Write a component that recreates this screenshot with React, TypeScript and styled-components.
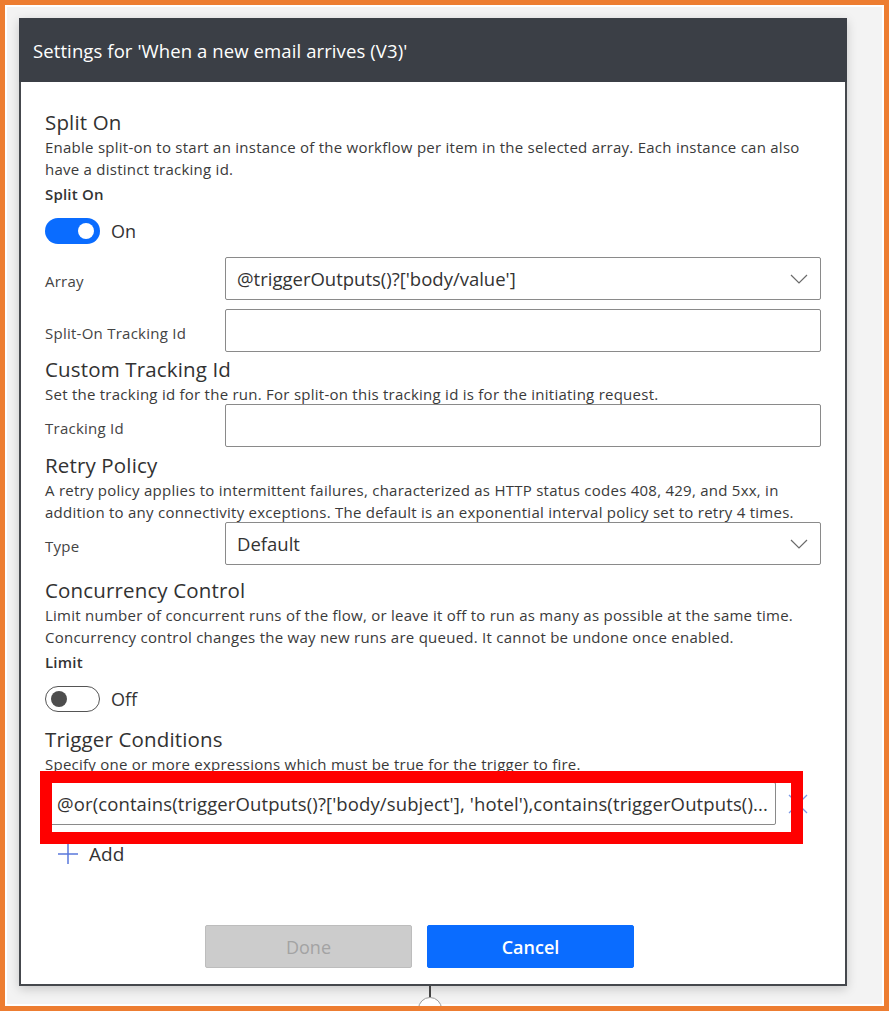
import React from "react";
import styled, { createGlobalStyle, css } from "styled-components";

const GlobalStyle = createGlobalStyle`
  html, body {
    margin: 0;
    padding: 0;
    background: #f4f4f4;
  }
  body {
    font-family: "Open Sans", "Noto Sans", sans-serif;
    color: #333;
  }
`;

const Frame = styled.div`
  position: relative;
  box-sizing: border-box;
  width: 889px;
  height: 1011px;
  border: 5px solid #ed7d31;
  background: #f3f3f3;
  box-shadow: inset 0 0 0 2px #ffffff;
  padding: 13px 0 0 14px;
  overflow: hidden;
`;

const Card = styled.div`
  box-sizing: border-box;
  width: 828px;
  background: #ffffff;
  border: 2px solid #45484d;
  border-top: none;
  box-shadow: 0 3px 10px rgba(0, 0, 0, 0.18);
`;

const Header = styled.div`
  height: 64px;
  display: flex;
  align-items: center;
  padding-left: 14px;
  margin: 0 -2px;
  background: #3b3f46;
  color: #ffffff;
  font-size: 18.5px;
  letter-spacing: 0.1px;
`;

const Body = styled.div`
  padding: 27px 24px 16px 24px;
`;

type Spaced = { $mt?: number };

const spaced = css<Spaced>`
  margin-top: ${(p) => p.$mt ?? 0}px;
`;

const SectionTitle = styled.div<Spaced>`
  ${spaced};
  font-size: 20.5px;
  line-height: 26px;
  letter-spacing: 0.15px;
  color: #323232;
`;

const Description = styled.div<Spaced>`
  ${spaced};
  font-size: 15px;
  line-height: 22px;
  letter-spacing: 0.25px;
  color: #3a3a3a;
  white-space: nowrap;
`;

const FieldLabel = styled.div<Spaced>`
  ${spaced};
  font-size: 15px;
  line-height: 22px;
  letter-spacing: 0.2px;
  font-weight: 600;
  color: #333;
`;

const ToggleRow = styled.div<Spaced>`
  ${spaced};
  display: flex;
  align-items: center;
  gap: 11px;
  height: 26px;
`;

const Toggle = styled.span<{ $on?: boolean }>`
  box-sizing: border-box;
  position: relative;
  display: inline-block;
  width: 55px;
  height: 26px;
  border-radius: 13px;
  background: ${(p) => (p.$on ? "#0a6cff" : "#ffffff")};
  border: ${(p) => (p.$on ? "none" : "1.5px solid #555")};

  &::after {
    content: "";
    position: absolute;
    top: 50%;
    transform: translateY(-50%);
    width: 16px;
    height: 16px;
    border-radius: 50%;
    background: ${(p) => (p.$on ? "#ffffff" : "#4d4d4d")};
    ${(p) => (p.$on ? "right: 6px;" : "left: 5px;")}
  }
`;

const ToggleText = styled.span`
  font-size: 18px;
  color: #333;
`;

const FormRow = styled.div<Spaced>`
  ${spaced};
  display: flex;
  align-items: center;
`;

const RowLabel = styled.div`
  width: 180px;
  flex: none;
  padding-top: 4px;
  font-size: 15px;
  letter-spacing: 0.25px;
  color: #444;
`;

const Field = styled.div<{ $width?: number }>`
  box-sizing: border-box;
  display: flex;
  align-items: center;
  justify-content: space-between;
  width: ${(p) => (p.$width ? `${p.$width}px` : "596px")};
  height: 43px;
  padding: 0 12px 0 11px;
  border: 1px solid #8a8a8a;
  border-radius: 2px;
  background: #fff;
  font-size: 18.5px;
  color: #333;
  white-space: nowrap;
  overflow: hidden;
`;

const Chevron = () => (
  <svg width="18" height="10" viewBox="0 0 18 10" fill="none">
    <path d="M1 1 L9 9 L17 1" stroke="#6b6b6b" strokeWidth="1.2" />
  </svg>
);

const ConditionWrap = styled.div<Spaced>`
  ${spaced};
  position: relative;
  display: flex;
  align-items: center;
`;

const ConditionText = styled.span`
  font-size: 18.5px;
  letter-spacing: 0.12px;
`;

const RemoveIcon = styled.span`
  display: inline-flex;
  margin-left: 11px;
`;

const Highlight = styled.div`
  position: absolute;
  top: -11px;
  left: -5px;
  width: 763px;
  height: 73px;
  box-sizing: border-box;
  border: 12px solid #ff0000;
  pointer-events: none;
`;

const AddRow = styled.div<Spaced>`
  ${spaced};
  display: flex;
  align-items: center;
  gap: 10px;
  padding-left: 12px;
  font-size: 19px;
  color: #333;
  line-height: 22px;
`;

const Actions = styled.div<Spaced>`
  ${spaced};
  display: flex;
  gap: 15px;
  padding-left: 160px;
`;

const Button = styled.button<{ $primary?: boolean }>`
  box-sizing: border-box;
  width: 207px;
  height: 43px;
  border-radius: 2px;
  font-family: inherit;
  font-size: 18px;
  ${(p) =>
    p.$primary
      ? css`
          background: #0a6cff;
          border: 1px solid #0a6cff;
          color: #fff;
          font-weight: 600;
        `
      : css`
          background: #cccccc;
          border: 1px solid #bdbdbd;
          color: #a3a3a3;
        `}
`;

const Connector = styled.div`
  display: flex;
  flex-direction: column;
  align-items: center;
  width: 24px;
  margin-left: 399px;
`;

const ConnectorLine = styled.span`
  width: 2px;
  height: 11px;
  background: #444;
`;

const ConnectorDot = styled.span`
  box-sizing: border-box;
  width: 24px;
  height: 24px;
  border-radius: 50%;
  border: 1.5px solid #9a9a9a;
  background: #fff;
`;

export default function App() {
  return (
    <>
      <GlobalStyle />
      <Frame>
        <Card>
          <Header>Settings for 'When a new email arrives (V3)'</Header>
          <Body>
            <SectionTitle>Split On</SectionTitle>
            <Description $mt={1}>
              Enable split-on to start an instance of the workflow per item in the selected array. Each instance can also
              <br />
              have a distinct tracking id.
            </Description>
            <FieldLabel $mt={3}>Split On</FieldLabel>
            <ToggleRow $mt={13}>
              <Toggle $on />
              <ToggleText>On</ToggleText>
            </ToggleRow>
            <FormRow $mt={13}>
              <RowLabel>Array</RowLabel>
              <Field>
                <span>@triggerOutputs()?['body/value']</span>
                <Chevron />
              </Field>
            </FormRow>
            <FormRow $mt={9}>
              <RowLabel>Split-On Tracking Id</RowLabel>
              <Field />
            </FormRow>

            <SectionTitle $mt={4}>Custom Tracking Id</SectionTitle>
            <Description $mt={1}>
              Set the tracking id for the run. For split-on this tracking id is for the initiating request.
            </Description>
            <FormRow $mt={-1}>
              <RowLabel>Tracking Id</RowLabel>
              <Field />
            </FormRow>

            <SectionTitle $mt={5}>Retry Policy</SectionTitle>
            <Description $mt={1}>
              A retry policy applies to intermittent failures, characterized as HTTP status codes 408, 429, and 5xx, in
              <br />
              addition to any connectivity exceptions. The default is an exponential interval policy set to retry 4 times.
            </Description>
            <FormRow $mt={-1}>
              <RowLabel>Type</RowLabel>
              <Field>
                <span>Default</span>
                <Chevron />
              </Field>
            </FormRow>

            <SectionTitle $mt={12}>Concurrency Control</SectionTitle>
            <Description $mt={1}>
              Limit number of concurrent runs of the flow, or leave it off to run as many as possible at the same time.
              <br />
              Concurrency control changes the way new runs are queued. It cannot be undone once enabled.
            </Description>
            <FieldLabel $mt={3}>Limit</FieldLabel>
            <ToggleRow $mt={13}>
              <Toggle />
              <ToggleText>Off</ToggleText>
            </ToggleRow>

            <SectionTitle $mt={14}>Trigger Conditions</SectionTitle>
            <Description $mt={1}>
              Specify one or more expressions which must be true for the trigger to fire.
            </Description>
            <ConditionWrap $mt={7}>
              <Field $width={731}>
                <ConditionText>
                  @or(contains(triggerOutputs()?['body/subject'], 'hotel'),contains(triggerOutputs()...
                </ConditionText>
              </Field>
              <RemoveIcon>
                <svg width="22" height="22" viewBox="0 0 22 22" fill="none">
                  <path d="M2 2 L20 20 M20 2 L2 20" stroke="#7d9be6" strokeWidth="1.3" />
                </svg>
              </RemoveIcon>
              <Highlight />
            </ConditionWrap>
            <AddRow $mt={18}>
              <svg width="22" height="22" viewBox="0 0 22 22" fill="none">
                <path d="M11 1 V21 M1 11 H21" stroke="#5a78dc" strokeWidth="1.5" />
              </svg>
              <span>Add</span>
            </AddRow>

            <Actions $mt={60}>
              <Button>Done</Button>
              <Button $primary>Cancel</Button>
            </Actions>
          </Body>
        </Card>
        <Connector>
          <ConnectorLine />
          <ConnectorDot />
        </Connector>
      </Frame>
    </>
  );
}
